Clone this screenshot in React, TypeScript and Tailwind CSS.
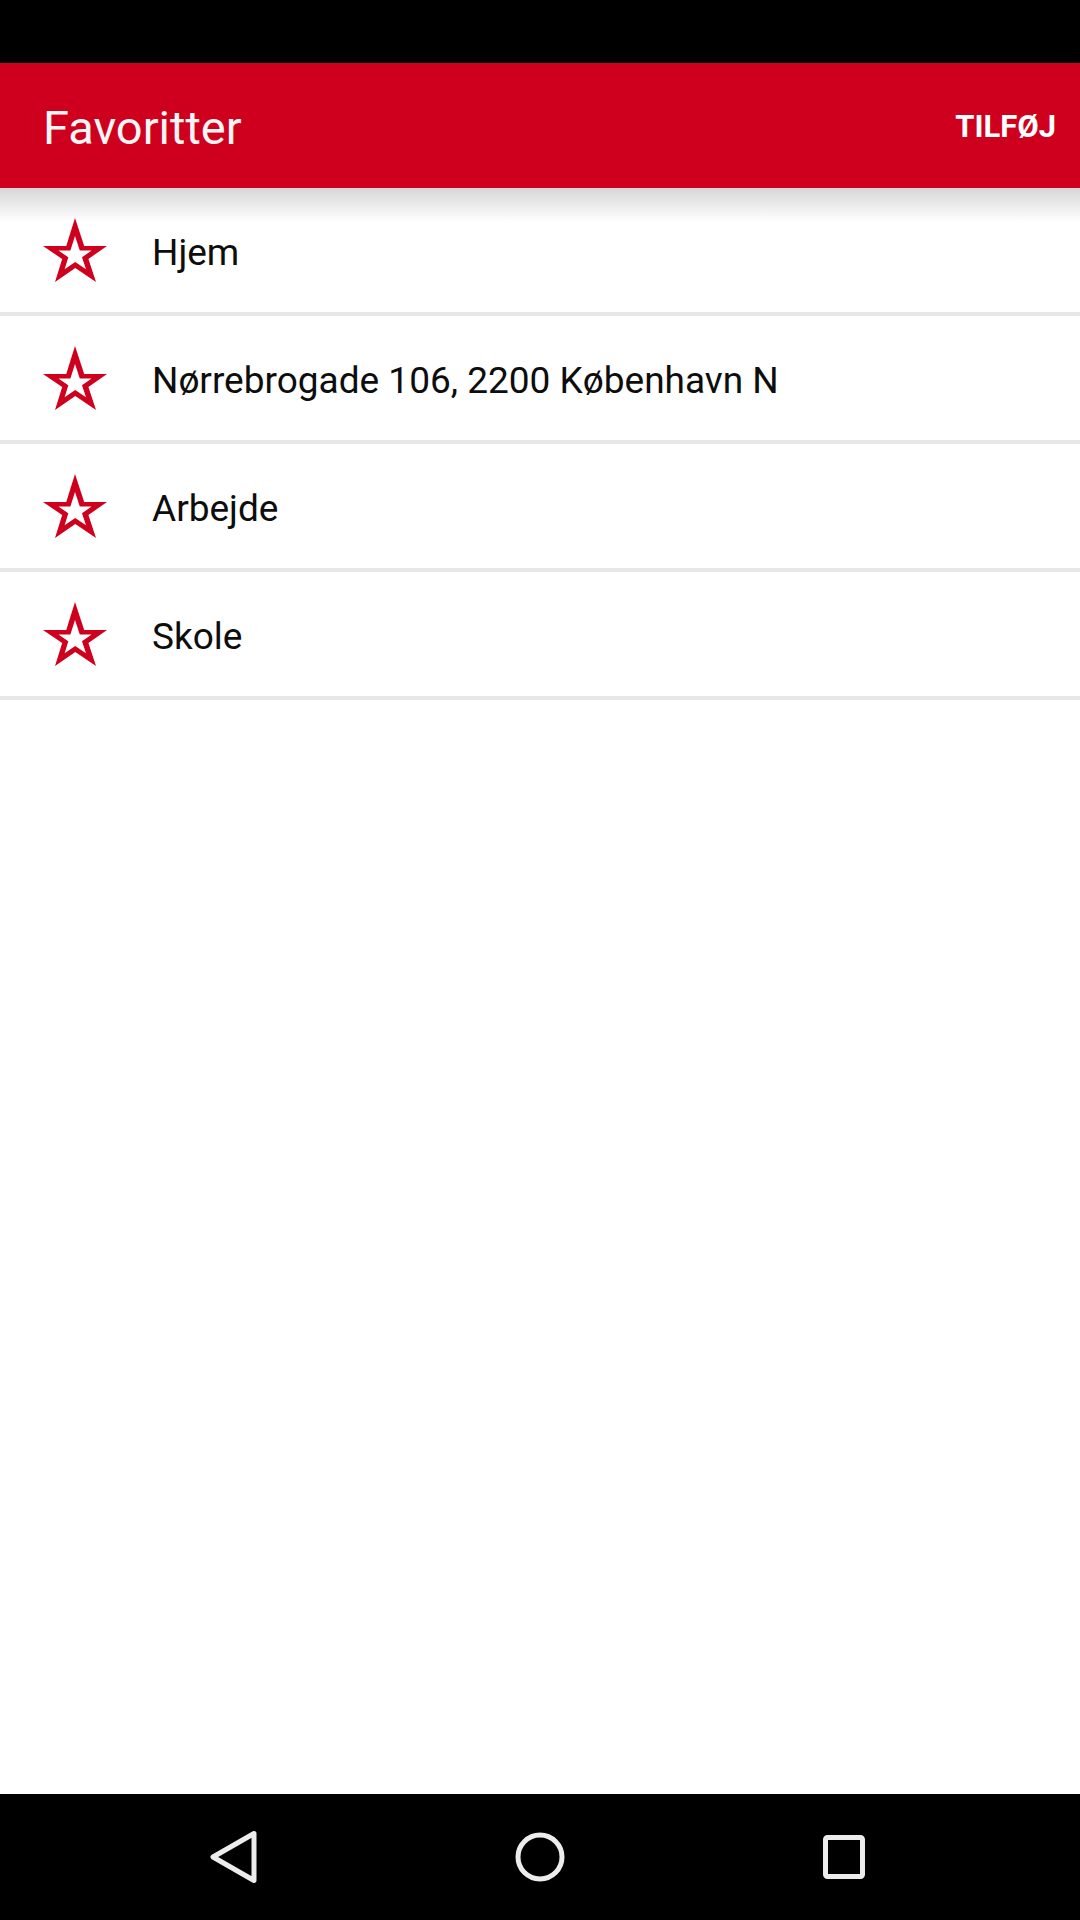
const favorites = ['Hjem', 'Nørrebrogade 106, 2200 København N', 'Arbejde', 'Skole']

function StarOutline() {
  return (
    <svg width="64" height="64" viewBox="0 0 64 64" className="shrink-0">
      <path
        fillRule="evenodd"
        fill="#cf001d"
        d="M32 0 L41.2 28 L64 28 L45.4 40.9 L53 64 L32.3 49.9 L12 64 L19.2 41 L0 28 L23.25 28 Z M32 18 L27.4 32.5 L15.4 32.5 L25.3 39.3 L21.6 51.3 L32.2 44 L43 51.3 L39 39.3 L48.6 32.5 L36.8 32.5 Z"
      />
    </svg>
  )
}

export default function App() {
  return (
    <div className="w-[1080px] h-[1920px] flex flex-col bg-white font-['Roboto',sans-serif]">
      {/* Status bar */}
      <div className="h-[63px] bg-black shrink-0" />

      {/* Toolbar */}
      <div className="relative z-10 h-[125px] shrink-0 bg-[#cf001d] flex items-center justify-between pl-[43px] pr-[24px]">
        <h1 className="mt-[3px] text-[47px] leading-none text-[#f5f5f5] font-normal">Favoritter</h1>
        <button className="mt-[2px] text-[31px] leading-none font-bold text-white">TILFØJ</button>
        <div className="absolute left-0 right-0 top-full h-[34px] bg-linear-to-b from-[rgba(0,0,0,0.16)] to-transparent pointer-events-none" />
      </div>

      {/* List */}
      <div className="flex-1 flex flex-col">
        {favorites.map((name) => (
          <div key={name} className="h-[128px] flex items-center border-b-4 border-[#e8e8e8] pl-[43px]">
            <StarOutline />
            <span className="ml-[45px] mt-[4px] text-[37px] leading-none text-[#0d0d0d]">{name}</span>
          </div>
        ))}
      </div>

      {/* Nav bar */}
      <div className="h-[126px] shrink-0 bg-black flex items-center justify-center gap-[205px]">
        <svg width="100" height="60" viewBox="0 0 100 60">
          <path d="M69 6.5 L28 30 L69 53.5 Z" fill="none" stroke="#ececec" strokeWidth="5" strokeLinejoin="round" />
        </svg>
        <svg width="100" height="60" viewBox="0 0 100 60">
          <circle cx="50" cy="30" r="22" fill="none" stroke="#ececec" strokeWidth="5" />
        </svg>
        <svg width="100" height="60" viewBox="0 0 100 60">
          <rect x="30.5" y="10.5" width="37" height="39" rx="2" fill="none" stroke="#ececec" strokeWidth="5" />
        </svg>
      </div>
    </div>
  )
}
